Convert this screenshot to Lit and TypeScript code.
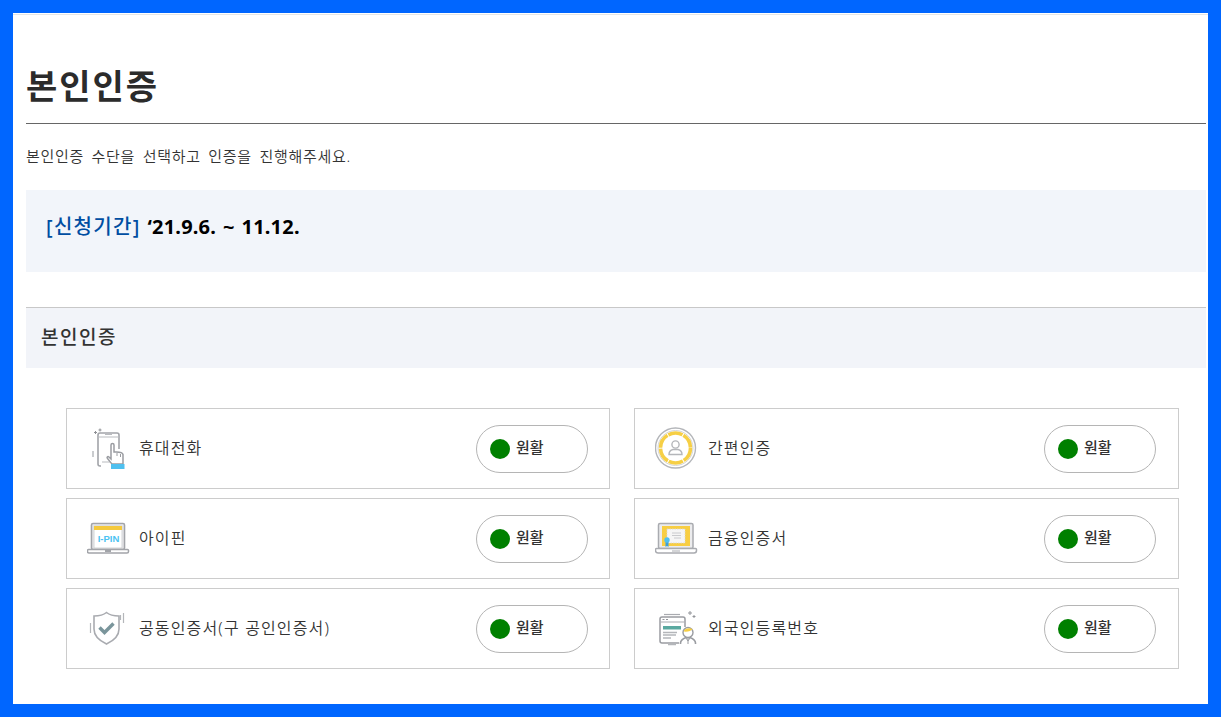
import { LitElement, html, css, svg } from 'lit';
import { customElement } from 'lit/decorators.js';

const phoneIcon = svg`
  <path d="M14 39h-1a2 2 0 0 1-2-2V8a2 2 0 0 1 2-2h17a2 2 0 0 1 2 2v14" fill="none" stroke="#a2a4a9" stroke-width="1.600"/>
  <path d="M11 10h21M15 35h9M18 7.500h7" fill="none" stroke="#b9bbbf" stroke-width="1"/>
  <path d="M10 5.500h-3M8.500 4v3M13 1.500v3M11.500 3h3" stroke="#8e9095" stroke-width="1"/>
  <path d="M6 24v6" stroke="#b9bbbf" stroke-width="1.500"/>
  <path d="M25 37c-2-2-3-4-4.500-5.500-1-1 0-2.500 1.500-1.500l2 2V18a1.500 1.500 0 0 1 3 0v7h2.500c2.500 0 6 .5 6.500 2.500V37z" fill="#fff" stroke="#9a9ca1" stroke-width="1.500"/>
  <path d="M30 26v3M33.500 27v3" stroke="#9a9ca1" stroke-width="1"/>
  <rect x="24" y="37" width="13.500" height="5" fill="#4fc0ef"/>
`;

const ipinIcon = svg`
  <rect x="4.500" y="6.500" width="33" height="26" rx="1.500" fill="#ececee" stroke="#a2a4a9" stroke-width="1.600"/>
  <rect x="7" y="9" width="28" height="22" fill="#fff" stroke="#c9cacd" stroke-width=".8"/>
  <rect x="7" y="9" width="28" height="4" fill="#f5c93d"/>
  <text class="pin" x="21.500" y="24.500" text-anchor="middle">I-PIN</text>
  <path d="M1.500 32.500h39a1 1 0 0 1 1 1v1a1.500 1.500 0 0 1-1.500 1.500H2a1.500 1.500 0 0 1-1.500-1.500v-1a1 1 0 0 1 1-1z" fill="#fff" stroke="#a2a4a9" stroke-width="1.500"/>
  <rect x="18" y="32.500" width="6" height="2.500" fill="#a2a4a9"/>
`;

const shieldIcon = svg`
  <path d="M19.500 5.500c3 2.500 8 3.500 12.500 3.500v13c0 7-6 12-12.500 15C13 34 7 29 7 22V9c4.500 0 9.500-1 12.500-3.500z" fill="#fff" stroke="#a9abb0" stroke-width="1.600"/>
  <path d="M12.500 20.500l5 5 9-9" fill="none" stroke="#7a959b" stroke-width="3.400"/>
  <path d="M3.500 16v10M36.500 6v10M33.500 8v5" stroke="#b4b6ba" stroke-width="1.200"/>
`;

const easyIcon = svg`
  <circle cx="20.500" cy="21" r="20" fill="#fff" stroke="#b4b6ba" stroke-width="1.400"/>
  <circle cx="20.500" cy="21" r="17.500" fill="none" stroke="#d3d4d7" stroke-width="1"/>
  <circle cx="20.500" cy="21" r="15" fill="none" stroke="#f6cf45" stroke-width="3.600" stroke-dasharray="14.700 1"/>
  <circle cx="20.500" cy="17.500" r="3.600" fill="none" stroke="#b4b6ba" stroke-width="1.400"/>
  <path d="M14 27.500c0-3 2-4.500 4-5h5c2 .5 4 2 4 5z" fill="none" stroke="#b4b6ba" stroke-width="1.400"/>
`;

const certIcon = svg`
  <rect x="3.500" y="6.500" width="34.500" height="25" rx="1.500" fill="#ececee" stroke="#a9abb0" stroke-width="1.500"/>
  <rect x="7" y="9" width="28" height="20" fill="#f8ce42"/>
  <rect x="12" y="12" width="18" height="14" fill="#f5f5f5" stroke="#d8d8d8" stroke-width=".8" stroke-dasharray="1.500 1"/>
  <path d="M17 16h9M17 18.500h9M19 21h7" stroke="#c9cacd" stroke-width="1"/>
  <path d="M10.500 24h3v6l-1.500-1-1.500 1z" fill="#3f9fd8"/>
  <circle cx="12" cy="23" r="2.700" fill="#4fc0ef"/>
  <path d="M1.500 31.500h39a1 1 0 0 1 1 1v1a2.500 2.500 0 0 1-2.500 2.500H3a2.500 2.500 0 0 1-2.500-2.500v-1a1 1 0 0 1 1-1z" fill="#fff" stroke="#a9abb0" stroke-width="1.500"/>
  <path d="M17 34h8" stroke="#a9abb0" stroke-width="1"/>
`;

const foreignIcon = svg`
  <path d="M9 7.500h16" stroke="#a9abb0" stroke-width="1.200"/>
  <path d="M24 36H7a2 2 0 0 1-2-2V12a2 2 0 0 1 2-2h21a2 2 0 0 1 2 2v8" fill="none" stroke="#9a9ca1" stroke-width="1.500"/>
  <path d="M5.500 15h24" stroke="#a9abb0" stroke-width="1"/>
  <path d="M7.500 12.500h2M11 12.500h2" stroke="#929499" stroke-width="1.200"/>
  <rect x="8" y="19" width="18" height="3.500" fill="#5aa9a0"/>
  <path d="M8 25.500h14M8 28h13M8 31h8M13 37.500h8" stroke="#b4b6ba" stroke-width="1.300"/>
  <path d="M35 4v4M33 6h4M39 8v3M37.500 9.500h3" stroke="#929499" stroke-width="1"/>
  <path d="M25.500 37v-1c0-3 3-4.500 5.500-5.500h4c2.500 1 5.500 2.500 5.500 5.500v1" fill="#fff" stroke="#9a9ca1" stroke-width="1.600"/>
  <path d="M33 31v6M31 31l2 3 2-3" fill="none" stroke="#9a9ca1" stroke-width="1"/>
  <circle cx="33" cy="25.500" r="5" fill="#fff" stroke="#9a9ca1" stroke-width="1.400"/>
  <path d="M28.500 24.500c1-3 6-4 9-2.500-1 2-5 3-9 2.500z" fill="#f6cf45"/>
`;

const methods = [
  { name: '휴대전화', icon: phoneIcon },
  { name: '간편인증', icon: easyIcon },
  { name: '아이핀', icon: ipinIcon },
  { name: '금융인증서', icon: certIcon },
  { name: '공동인증서(구 공인인증서)', icon: shieldIcon },
  { name: '외국인등록번호', icon: foreignIcon },
];

@customElement('app-root')
export class AppRoot extends LitElement {
  static styles = css`
    :host {
      display: block;
      box-sizing: border-box;
      height: 717px;
      border: 13px solid #0066ff;
      background: #fff;
      font-family: 'Noto Sans', 'Noto Sans CJK KR', sans-serif;
      color: #333;
      overflow: hidden;
    }

    .page {
      padding: 1px 2px 0 13px;
      border-top: 1px solid #e4e6e6;
      margin-top: 1px;
    }

    h1 {
      margin: 0;
      padding: 47px 0 12px;
      height: 48px;
      line-height: 47px;
      font-size: 34px;
      font-weight: 700;
      letter-spacing: 2px;
      color: #2b2b2b;
      border-bottom: 1px solid #666;
    }

    .lead {
      margin: 0;
      padding-top: 20px;
      height: 46px;
      line-height: 24px;
      font-size: 15px;
      font-weight: 350;
      letter-spacing: 0.700px;
      word-spacing: 3px;
    }

    .notice {
      height: 82px;
      box-sizing: border-box;
      padding: 21px 20px 0;
      background: #f2f5fa;
      line-height: 32px;
      font-size: 20px;
      font-weight: 700;
      letter-spacing: 0.200px;
      word-spacing: 1.500px;
      color: #000;
    }

    .notice span {
      color: #004ea2;
      font-weight: 500;
      letter-spacing: 1.300px;
    }

    h2 {
      margin: 35px 0 0;
      height: 60px;
      padding-left: 15px;
      line-height: 59px;
      font-size: 19px;
      font-weight: 500;
      letter-spacing: 1.500px;
      background: #f2f4f9;
      border-top: 1px solid #c8c8c8;
    }

    .grid {
      display: grid;
      grid-template-columns: 544px 545px;
      column-gap: 24px;
      row-gap: 9px;
      padding: 40px 0 0 40px;
    }

    .card {
      display: flex;
      align-items: center;
      box-sizing: border-box;
      height: 81px;
      padding: 0 21px 0 20px;
      border: 1px solid #ccc;
    }

    .card:nth-child(even) {
      padding: 0 22px 0 20px;
    }

    .card svg {
      flex: none;
      width: 44px;
      height: 44px;
      margin-right: 8px;
    }

    .card:nth-child(even) svg {
      margin-right: 9px;
    }

    .pin {
      font: 700 9.500px 'Liberation Sans', sans-serif;
      fill: #4cc3f2;
    }

    .name {
      flex: 1;
      padding-bottom: 3px;
      font-size: 16px;
      font-weight: 350;
      letter-spacing: 1.150px;
    }

    .status {
      display: flex;
      align-items: center;
      gap: 6px;
      box-sizing: border-box;
      width: 112px;
      height: 48px;
      padding-left: 13px;
      border: 1px solid #b5b5b5;
      border-radius: 24px;
      font-size: 15px;
      font-weight: 500;
    }

    .status b {
      padding-bottom: 5px;
      font-weight: 500;
    }

    .dot {
      width: 20px;
      height: 20px;
      border-radius: 50%;
      background: #008000;
    }
  `;

  render() {
    return html`
      <div class="page">
        <h1>본인인증</h1>
        <p class="lead">본인인증 수단을 선택하고 인증을 진행해주세요.</p>
        <div class="notice"><span>[신청기간]</span> ‘21.9.6. ~ 11.12.</div>
        <h2>본인인증</h2>
        <div class="grid">
          ${methods.map(
            (m) => html`
              <div class="card">
                <svg viewBox="0 0 44 44">${m.icon}</svg>
                <div class="name">${m.name}</div>
                <div class="status"><i class="dot"></i><b>원활</b></div>
              </div>
            `
          )}
        </div>
      </div>
    `;
  }
}
